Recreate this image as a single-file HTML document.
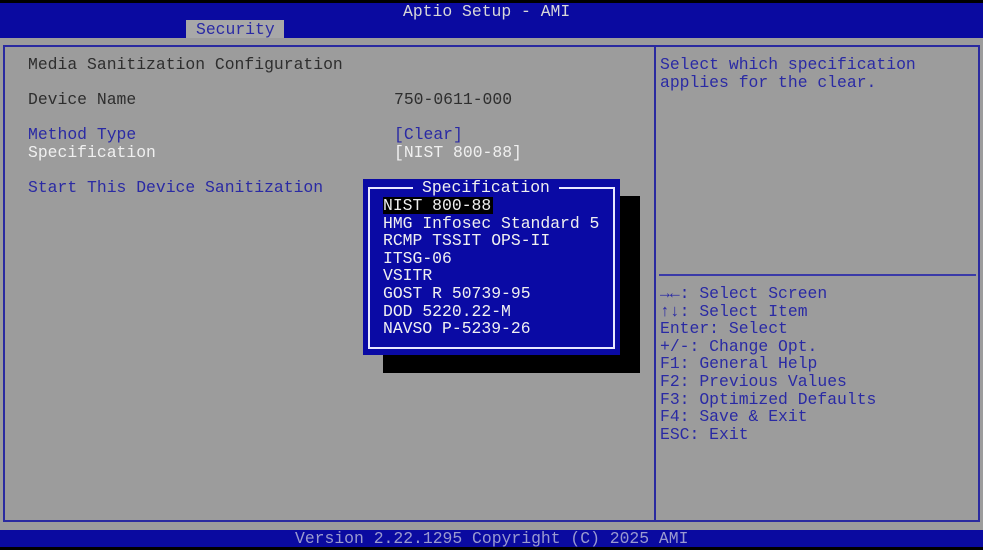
<!DOCTYPE html>
<html><head><style>
*{margin:0;padding:0;box-sizing:border-box}
body{width:983px;height:550px;background:#9c9c9c;position:relative;overflow:hidden;font-family:"Liberation Mono",monospace;font-size:16.4px;}
.t{position:absolute;white-space:pre;line-height:18px;}
.b{color:#2a2aa4}.w{color:#f0f0f0}.d{color:#2e2e2e}
</style></head><body>
<div style="position:absolute;left:0;top:0;width:983px;height:3px;background:#000"></div>
<div style="position:absolute;left:0;top:3px;width:983px;height:35px;background:#0a0aa0"></div>
<div class="t" style="left:403px;top:3px;color:#d8d8d8">Aptio Setup - AMI</div>
<div style="position:absolute;left:186px;top:20px;width:98px;height:18px;background:#a8a8a8"></div>
<div class="t b" style="left:196px;top:21px">Security</div>
<div style="position:absolute;left:3px;top:45px;width:977px;height:477px;border:2px solid #2a2aa0"></div>
<div style="position:absolute;left:654px;top:45px;width:2px;height:477px;background:#2a2aa0"></div>
<div style="position:absolute;left:659px;top:274px;width:317px;height:2px;background:#3a3aa8"></div>
<div class="t d" style="left:28px;top:56px">Media Sanitization Configuration</div>
<div class="t d" style="left:28px;top:91px">Device Name</div>
<div class="t d" style="left:394px;top:91px">750-0611-000</div>
<div class="t b" style="left:28px;top:126px">Method Type</div>
<div class="t b" style="left:394px;top:126px">[Clear]</div>
<div class="t w" style="left:28px;top:144px">Specification</div>
<div class="t w" style="left:394px;top:144px">[NIST 800-88]</div>
<div class="t b" style="left:28px;top:179px">Start This Device Sanitization</div>
<div class="t b" style="left:660px;top:56px">Select which specification
applies for the clear.</div>
<div class="t b" style="left:660px;top:285px;line-height:17.6px">→←: Select Screen
↑↓: Select Item
Enter: Select
+/-: Change Opt.
F1: General Help
F2: Previous Values
F3: Optimized Defaults
F4: Save &amp; Exit
ESC: Exit</div>
<div style="position:absolute;left:383px;top:196px;width:257px;height:177px;background:#000"></div>
<div style="position:absolute;left:363px;top:179px;width:257px;height:176px;background:#0a0aa4"></div>
<div style="position:absolute;left:368px;top:187px;width:247px;height:162px;border:2px solid #e8e8ff"></div>
<div class="t w" style="left:413px;top:179px;background:#0a0aa4;padding:0 9px">Specification</div>
<div style="position:absolute;left:383px;top:197px;width:110px;height:17px;background:#000"></div>
<div class="t w" style="left:383px;top:197px;line-height:17.6px">NIST 800-88
HMG Infosec Standard 5
RCMP TSSIT OPS-II
ITSG-06
VSITR
GOST R 50739-95
DOD 5220.22-M
NAVSO P-5239-26</div>
<div style="position:absolute;left:0;top:530px;width:983px;height:17px;background:#0a0aa0"></div>
<div style="position:absolute;left:0;top:547px;width:983px;height:3px;background:#000"></div>
<div class="t" style="left:295px;top:530px;color:#9a9ad0">Version 2.22.1295 Copyright (C) 2025 AMI</div>
</body></html>
